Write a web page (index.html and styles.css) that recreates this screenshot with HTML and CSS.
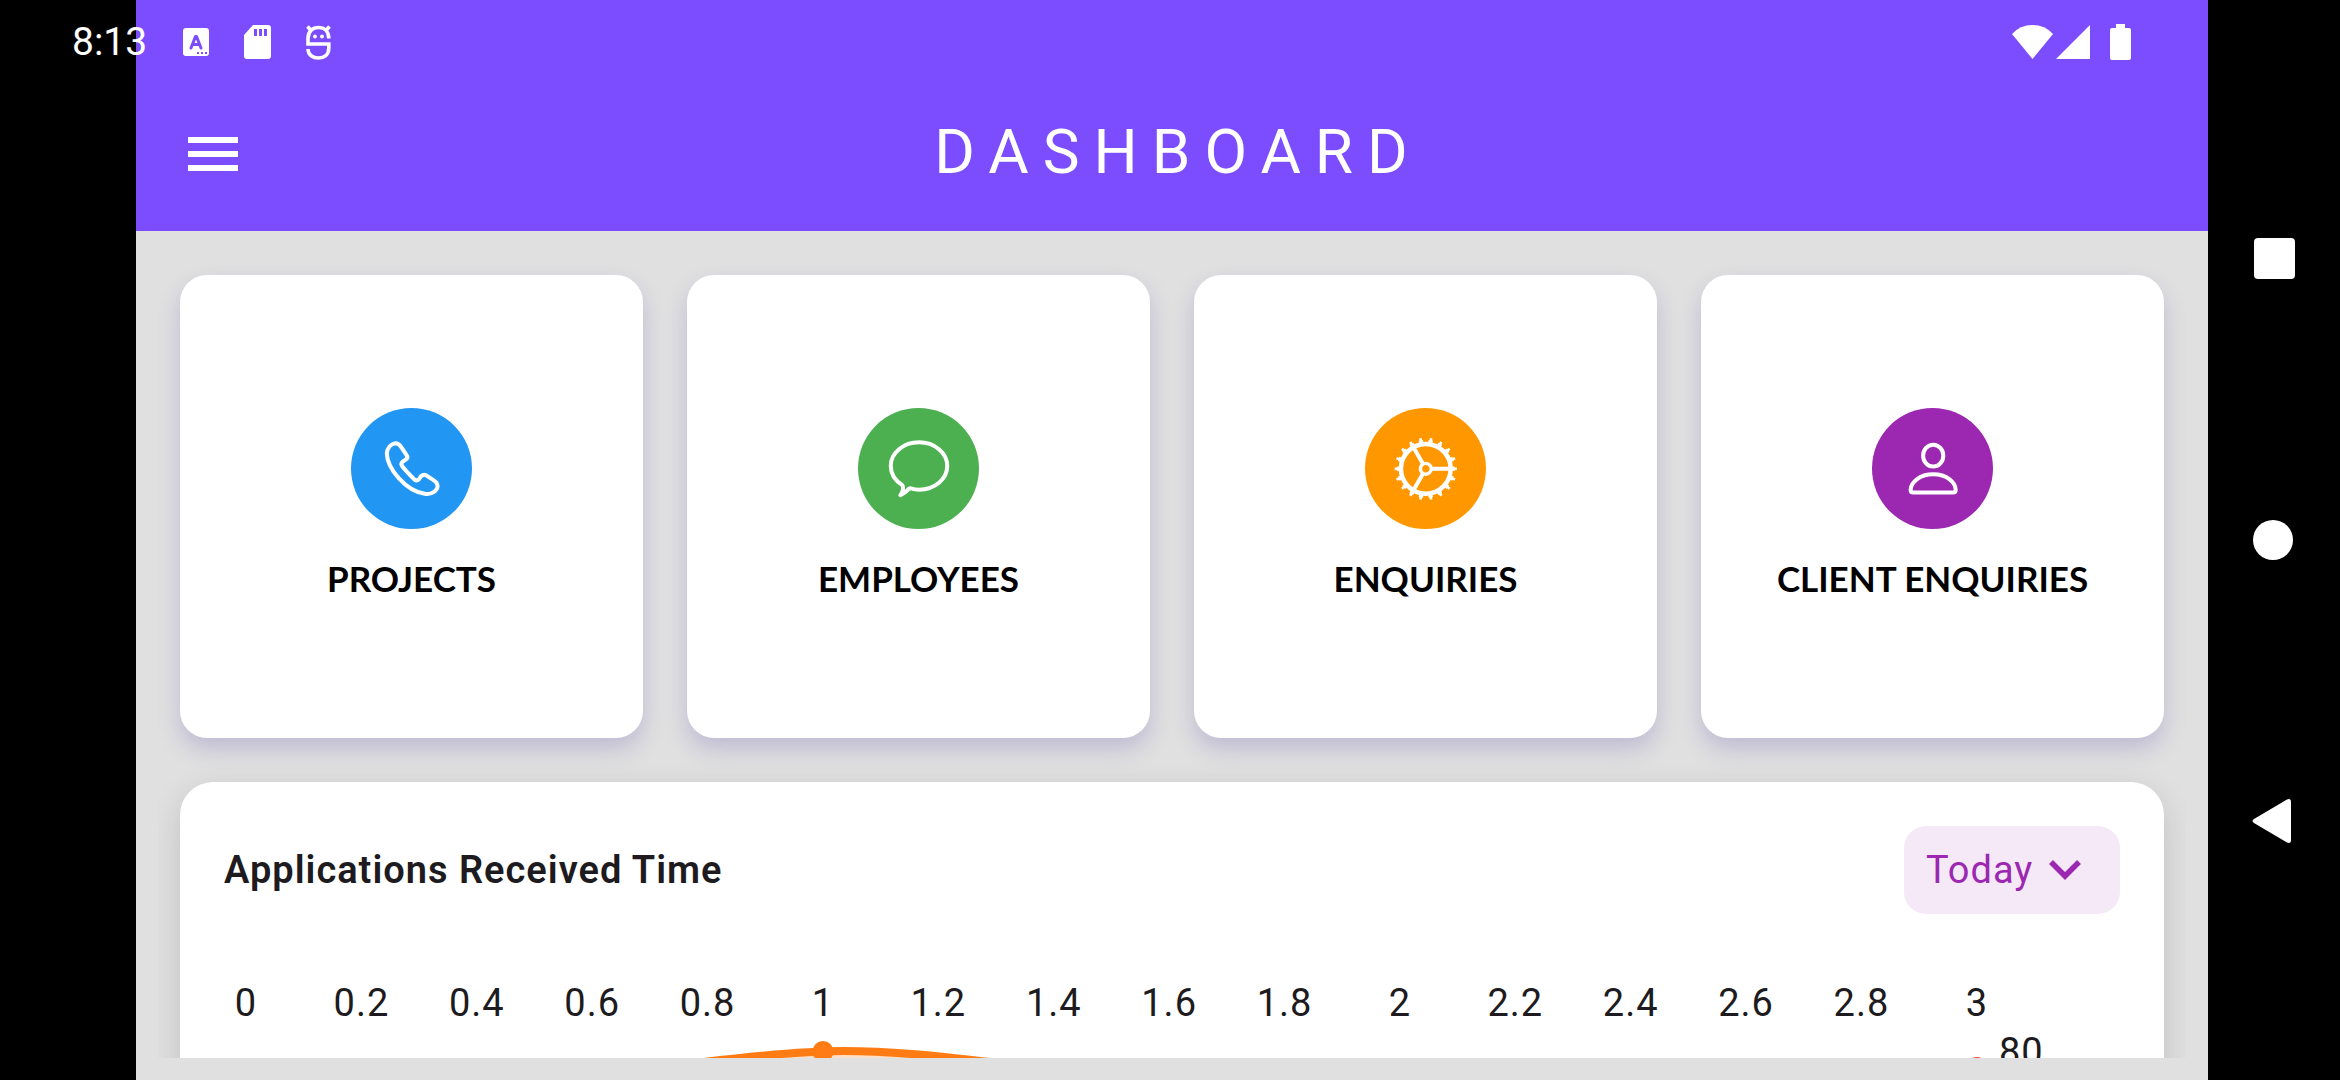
FILE: index.html
```html
<!DOCTYPE html>
<html lang="en">
<head>
<meta charset="utf-8">
<meta name="viewport" content="width=device-width, initial-scale=1">
<title>Dashboard</title>
<link rel="stylesheet" href="styles.css">
</head>
<body>
<div class="device">
  <div class="app">
    <header class="app-bar">
      <button class="menu-button" type="button" aria-label="Open menu">
        <svg width="50" height="34" viewBox="0 0 50 34" fill="currentColor"><path d="M0 0h50v6H0zM0 14h50v6H0zM0 28h50v6H0z"/></svg>
      </button>
      <h1 class="app-title">DASHBOARD</h1>
    </header>

    <main class="content">
      <nav class="tiles" aria-label="Sections">
        <a class="tile" href="#projects">
          <svg class="tile-icon blue" viewBox="0 0 120 120"><path d="M50 39L55 46.500Q57 49 54.500 51L51 53.500Q49 55.500 51 58C55 63 59 67 63 71Q65.500 73 67.500 70.500L69.500 67.500Q72 65.500 75 67L82.500 72Q87 75 85.500 79.500C83 84 78 86 73 85C54 82 36 60 35.500 45C36 39 40 35.500 44 35Q47.500 35 50 39Z"/></svg>
          <span class="tile-label">PROJECTS</span>
        </a>
        <a class="tile" href="#employees">
          <svg class="tile-icon green" viewBox="0 0 120 120"><path d="M52.500 79.700C55 80.500 58 81 60.500 81C76 81 88.500 70.500 88.500 57.500S76 34 60.500 34S32.500 44.500 32.500 57.500C32.500 65 37 72 44 76.500Q46 81 42 86.500Q47 84 49.500 81Q51 79.300 52.500 79.700Z"/></svg>
          <span class="tile-label">EMPLOYEES</span>
        </a>
        <a class="tile" href="#enquiries">
          <svg class="tile-icon orange" viewBox="0 0 120 120">
            <g transform="translate(60.300 60.300)">
              <circle r="24.700" stroke-width="4.500"/>
              <circle r="27.500" stroke-width="2.500" pathLength="360" stroke-dasharray="9 11" stroke-dashoffset="4.500"/>
              <circle r="29.600" stroke-width="2.600" pathLength="360" stroke-dasharray="5 15" stroke-dashoffset="2.500"/>
              <circle r="5.400" stroke-width="3.400"/>
              <path d="M6 0H24M-3 -5.200L-12 -20.800M-3 5.200L-12 20.800"/>
            </g>
          </svg>
          <span class="tile-label">ENQUIRIES</span>
        </a>
        <a class="tile" href="#client-enquiries">
          <svg class="tile-icon purple" viewBox="0 0 120 120"><ellipse cx="60.700" cy="47.300" rx="10" ry="10.800"/><path d="M41 83.800Q38.300 83.800 38.300 81C38.500 74 47 65.700 60.700 65.700S83 74 83 81Q83 83.800 80.300 83.800Z"/></svg>
          <span class="tile-label">CLIENT ENQUIRIES</span>
        </a>
      </nav>

      <section class="panel" aria-labelledby="chart-title">
        <div class="panel-head">
          <h2 class="panel-title" id="chart-title">Applications Received Time</h2>
          <div class="period">
            <select class="period-select" aria-label="Period"><option>Today</option></select>
            <svg class="period-arrow" width="32" height="20" viewBox="0 0 32 20" fill="none" stroke="currentColor" stroke-width="5.500"><path d="M2 2L16 16L30 2"/></svg>
          </div>
        </div>
        <ol class="x-axis">
          <li>0</li><li>0.2</li><li>0.4</li><li>0.6</li><li>0.8</li><li>1</li><li>1.2</li><li>1.4</li><li>1.6</li><li>1.8</li><li>2</li><li>2.2</li><li>2.4</li><li>2.6</li><li>2.8</li><li>3</li>
        </ol>
        <div class="plot">
          <svg class="plot-lines" viewBox="0 0 1775 260" role="img" aria-label="Applications received over time">
            <path fill="#ffdfc8" d="M22 260C150 120 330 52 480 33C530 27 580 22 620 22C670 22 720 28 766 33C1000 60 1200 140 1377 260Z"/>
            <path fill="none" stroke="#ff7c14" stroke-width="8" d="M22 260C150 120 330 52 480 33C530 27 580 22 620 22C670 22 720 28 766 33C1000 60 1200 140 1377 260"/>
            <circle cx="599" cy="22.500" r="10.500" fill="#ff7c14"/>
            <circle cx="1753" cy="38.500" r="10.500" fill="#f44336"/>
          </svg>
          <span class="y-label">80</span>
        </div>
      </section>
    </main>
  </div>

  <div class="system-nav">
    <button type="button" aria-label="Recent apps"><svg viewBox="0 0 44 44"><rect x="2" y="1" width="41" height="41" rx="4"/></svg></button>
    <button type="button" aria-label="Home"><svg viewBox="0 0 44 44"><circle cx="21" cy="22" r="20"/></svg></button>
    <button type="button" aria-label="Back"><svg viewBox="0 0 44 44"><path d="M2 20L35 0.500Q39 -1 39 3V41Q39 45 35 43.500L2 24Q-1 22 2 20Z"/></svg></button>
  </div>

  <div class="status-bar">
    <time class="clock">8:13</time>
    <svg width="28" height="28" viewBox="0 0 28 28"><path fill="#fff" fill-rule="evenodd" d="M4 0H24Q27 0 27 3V25Q27 28 24 28H4Q1 28 1 25V3Q1 0 4 0ZM15 24v2h2v-2zM19 24v2h2v-2zM23 24v2h2v-2z"/><path fill="none" stroke="#7c4dff" stroke-width="3" stroke-linecap="round" stroke-linejoin="round" d="M9 20L13.500 8.500h1L19 20M10.500 16.500h7"/></svg>
    <svg width="28" height="34" viewBox="0 0 28 34"><path fill="#fff" fill-rule="evenodd" d="M10 0H25Q28 0 28 3V31Q28 34 25 34H4Q1 34 1 31V10ZM11 4v7h3V4zM16 4v7h3V4zM21 4v7h3V4z"/></svg>
    <svg width="28" height="36" viewBox="0 0 28 36" fill="none" stroke="#fff" stroke-width="3.600"><path d="M24.800 14.500C24.800 7 20 3.500 14.500 3.500S4 7 4 14.500V20H24.800V24C24.800 31 20 34 14.500 34S4 31 4 25M3.500 2.500L7 6.500M25.500 2.500L22 6.500"/><circle cx="11" cy="12.500" r="1.900" fill="#fff" stroke="none"/><circle cx="18" cy="12.500" r="1.900" fill="#fff" stroke="none"/></svg>
    <div class="signals">
      <svg width="41" height="34" viewBox="0 0 41 34" fill="#fff"><path d="M0 9Q8 0 20.500 0T41 9L20.500 34Z"/></svg>
      <svg width="34" height="34" viewBox="0 0 34 34" fill="#fff"><path d="M34 0V34H0Z"/></svg>
      <svg class="battery" width="21" height="36" viewBox="0 0 21 36" fill="#fff"><path d="M6 0h9v4h4Q21 4 21 6V34Q21 36 19 36H2Q0 36 0 34V6Q0 4 2 4H6Z"/></svg>
    </div>
  </div>
</div>
</body>
</html>
```
FILE: styles.css
```css
* {
  box-sizing: border-box;
}

body {
  margin: 0;
  background: #000;
  color: #1d1b20;
  font: 39px/46px Roboto, sans-serif;
}

button {
  display: flex;
  padding: 0;
  border: 0;
  background: none;
  color: inherit;
}

.device {
  position: relative;
  display: flex;
  height: 100vh;
  overflow: hidden;
  padding-left: 136px;
}

.app {
  flex: 1;
  min-width: 0;
  display: flex;
  flex-direction: column;
  background: #e0e0e0;
}

.app-bar {
  flex: none;
  display: grid;
  grid-template-columns: 1fr auto 1fr;
  align-items: center;
  min-height: 231px;
  padding: 77px 40px 0 52px;
  background: #7c4dff;
  color: #fff;
}

.app-title {
  margin: 0;
  padding-bottom: 4px;
  font-size: 62px;
  line-height: 72px;
  font-weight: 400;
  letter-spacing: 14px;
}

.content {
  flex: 1;
  min-height: 0;
  overflow: hidden;
  display: flex;
  flex-direction: column;
  gap: 44px;
  margin: 22px;
  padding: 22px;
}

.tiles {
  flex: none;
  display: grid;
  grid-template-columns: repeat(4, 1fr);
  gap: 44px;
}

.tile {
  aspect-ratio: 1;
  display: flex;
  flex-direction: column;
  align-items: center;
  justify-content: center;
  gap: 22px;
  border-radius: 27px;
  background: #fff;
  box-shadow: 0 11px 22px rgba(90, 70, 170, 0.24);
  color: #000;
  text-decoration: none;
}

.tile-icon {
  width: 121px;
  height: 121px;
  border-radius: 50%;
  fill: none;
  stroke: #fff;
  stroke-width: 4;
  stroke-linejoin: round;
}

.blue { background: #2196f3; }
.green { background: #4caf50; }
.orange { background: #ff9800; }
.purple { background: #9c27b0; }

.tile-label {
  font-family: Lato, sans-serif;
  font-size: 35px;
  line-height: 55px;
  font-weight: 700;
}

.panel {
  flex: none;
  padding: 44px;
  border-radius: 33px;
  background: #fff;
  box-shadow: 0 11px 33px rgba(0, 0, 0, 0.14);
  font-size: 38px;
  letter-spacing: 1px;
}

.panel-head {
  display: flex;
  align-items: center;
  justify-content: space-between;
}

.panel-title {
  margin: 0;
  font-size: inherit;
  font-weight: 600;
}

.period {
  display: grid;
  grid-template-columns: 1fr auto;
  align-items: center;
  color: #9c27b0;
}

.period-select {
  grid-area: 1 / 1 / 2 / 3;
  height: 88px;
  padding: 0 86px 0 22px;
  border: 0;
  border-radius: 22px;
  appearance: none;
  background: #f5e9f7;
  color: inherit;
  font: inherit;
  letter-spacing: inherit;
}

.period-arrow {
  grid-area: 1 / 2;
  margin-right: 39px;
  pointer-events: none;
}

.x-axis {
  display: flex;
  justify-content: space-between;
  margin: 66px 0 3px;
  padding: 0 121px 0 0;
  list-style: none;
}

.x-axis li {
  display: flex;
  justify-content: center;
  width: 44px;
}

.plot {
  display: grid;
  grid-template-columns: 1fr 121px;
}

.plot-lines {
  width: 100%;
}

.system-nav {
  flex: none;
  display: flex;
  flex-direction: column;
  align-items: center;
  justify-content: space-evenly;
  width: 132px;
}

.system-nav svg {
  width: 44px;
  height: 44px;
  fill: #fff;
}

/* The system status bar floats above both the bezel and the app */
.status-bar {
  position: absolute;
  inset: 0 0 auto;
  display: flex;
  align-items: center;
  gap: 33px;
  height: 83px;
  padding: 0 209px 0 72px;
  color: #fff;
  pointer-events: none;
}

.clock {
  min-width: 77px;
}

.signals {
  display: flex;
  align-items: center;
  gap: 3px;
  margin-left: auto;
}

.battery {
  margin-left: 17px;
}
```
